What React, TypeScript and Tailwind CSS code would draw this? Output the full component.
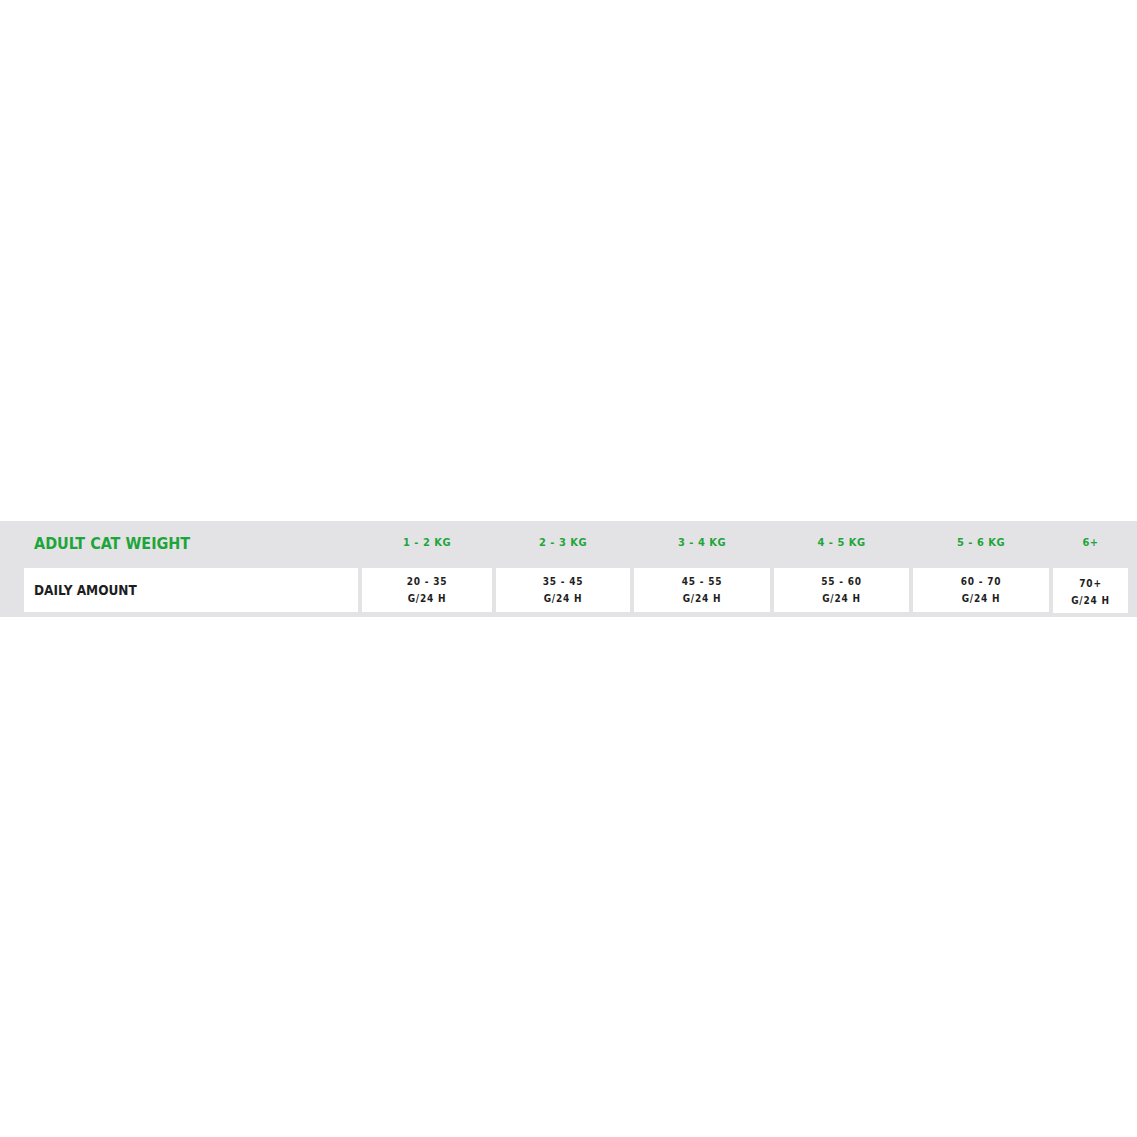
import React from "react";

const heads = ["1 - 2 KG", "2 - 3 KG", "3 - 4 KG", "4 - 5 KG", "5 - 6 KG", "6+"];
const vals = ["20 - 35", "35 - 45", "45 - 55", "55 - 60", "60 - 70", "70+"];

export default function App() {
  return (
    <div className="w-[1137px] h-[1137px] bg-white flex flex-col" style={{ fontFamily: '"DejaVu Sans Condensed", "Liberation Sans Narrow", "Liberation Sans", sans-serif' }}>
      <div className="h-[521px]" />
      <div className="bg-[#e3e3e6] pl-[24px] pb-[4px]">
        <div className="grid grid-cols-[334px_130px_134px_136px_135px_136px_75px] gap-x-[4px]">
          <div className="h-[47px] flex items-center pl-[10px] pb-[2px] text-[#1ea53a] font-bold text-[16px] tracking-[0px]">ADULT CAT WEIGHT</div>
          {heads.map((h) => (
            <div key={h} className="h-[47px] flex items-center justify-center pb-[2px] text-[#1ea53a] font-bold text-[11px] tracking-[0.5px]">
              {h}
            </div>
          ))}
          <div className="h-[44px] bg-white flex items-center pl-[10px] text-[#1e1e1e] font-bold text-[13.5px] tracking-[0px]">DAILY AMOUNT</div>
          {vals.map((v, i) => (
            <div key={v} className={`bg-white flex flex-col items-center justify-center text-[#1e1e1e] font-bold text-[10px] tracking-[0.8px] leading-[17px] ${i === 5 ? "h-[45px] pt-[2px]" : "h-[44px]"}`}>
              <span>{v}</span>
              <span>G/24 H</span>
            </div>
          ))}
        </div>
      </div>
    </div>
  );
}
